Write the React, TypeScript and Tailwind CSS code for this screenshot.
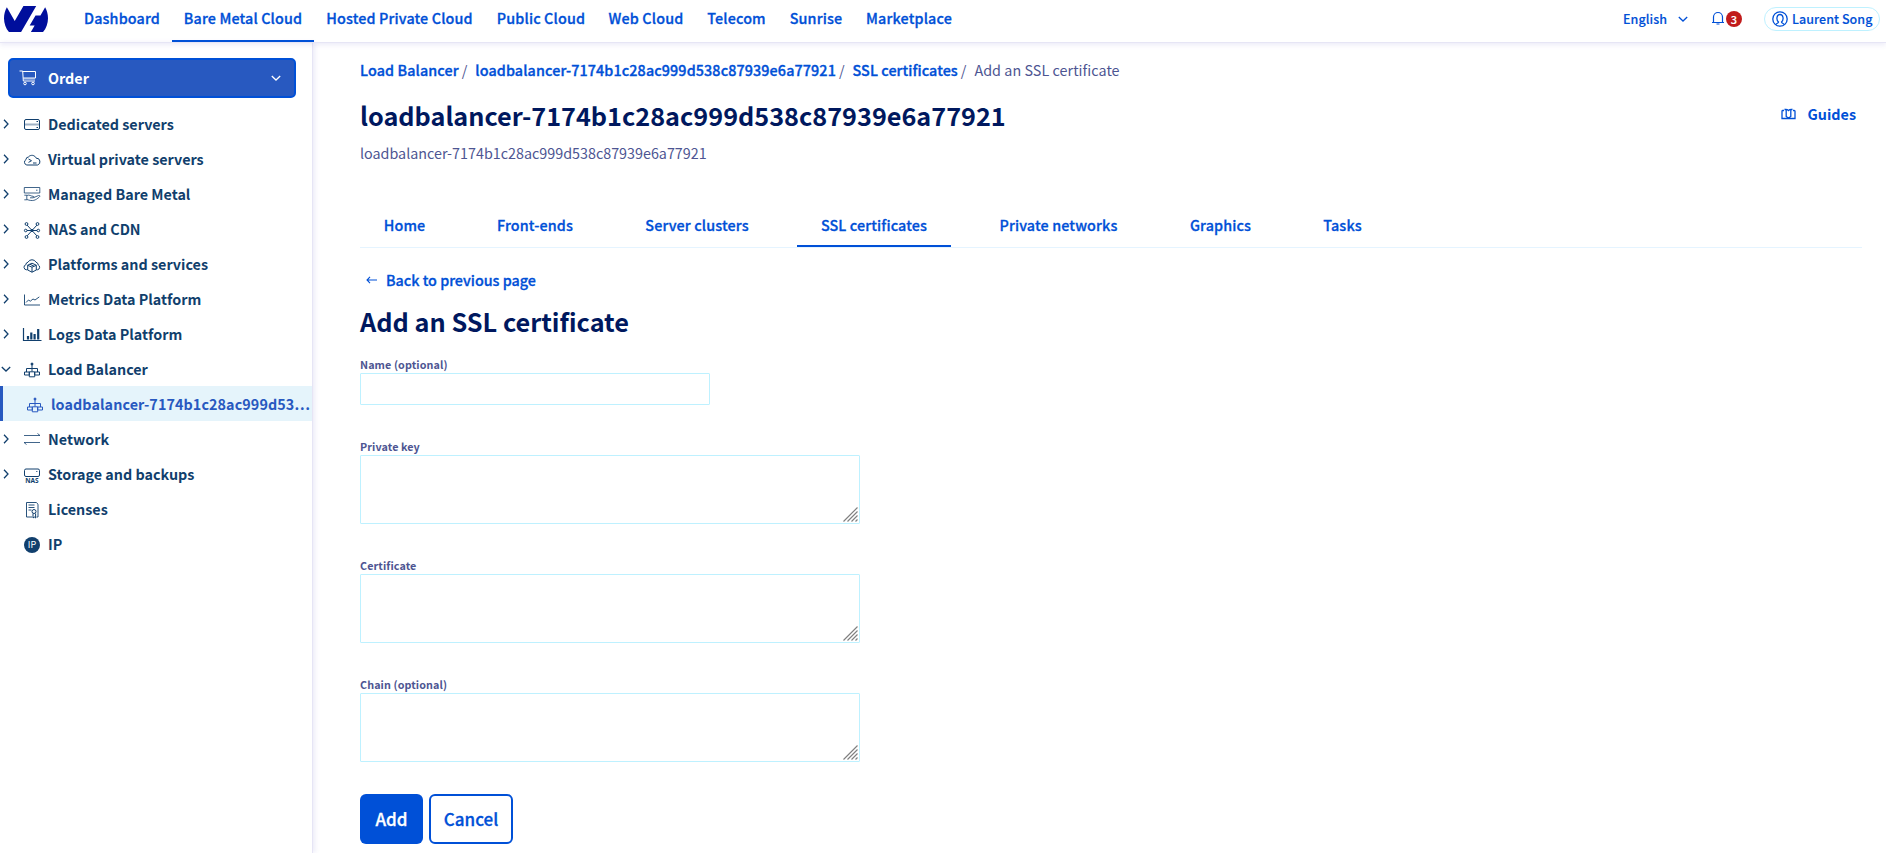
import React from "react";
import { SiOvh } from "react-icons/si";

type IconProps = { className?: string };

const Svg = ({ children }: { children: React.ReactNode }) => (
  <svg width="18" height="18" viewBox="0 0 18 18" fill="none" stroke="currentColor" strokeWidth="1">
    {children}
  </svg>
);

const ServerIcon = () => (
  <Svg>
    <rect x="1.500" y="3.500" width="15" height="10" rx="1.500" />
    <path d="M1.500 8.500h15" strokeWidth="2" strokeOpacity=".4" />
    <path d="M13.500 5.500h1.500M13.500 11.500h1.500" />
  </Svg>
);
const VpsIcon = () => (
  <Svg>
    <path d="M3.800 14A2.900 2.900 0 0 1 3 8.600 2.600 2.600 0 0 1 5.400 6 4.600 4.600 0 0 1 13.200 7.200 3.500 3.500 0 0 1 14.600 14z" />
    <path d="M5.500 8l3 1.700-3 1.700M10 12h3.500" />
  </Svg>
);
const ManagedIcon = () => (
  <Svg>
    <path d="M1.300 1.500h15.500v5.500H1.300zM13 4.200h1.500" strokeWidth=".8" />
    <path d="M1.300 9.200h2.500v4.600H1.300M3.800 9.400c3-1 4.200.9 6.200.9 1.300 0 1.300 1.500 0 1.500H7M10.800 11.500l4.800-2c1.300-.3 1.700.7.7 1.500-4 3.600-6.500 4.500-12.500 2.500" strokeWidth=".8" />
  </Svg>
);
const NasCdnIcon = () => (
  <Svg>
    <path d="M4 4l10 11M14 4L4 15M3.500 9.500h11" />
    <path d="M9 8l1.500 1.500L9 11 7.500 9.500z" fill="currentColor" />
    <g fill="#fff">
      <circle cx="3.500" cy="3" r="1.400" /><circle cx="14.500" cy="3" r="1.400" />
      <circle cx="2.700" cy="9.500" r="1.300" /><circle cx="15.300" cy="9.500" r="1.300" />
      <circle cx="3.500" cy="16" r="1.400" /><circle cx="14.500" cy="16" r="1.400" />
    </g>
  </Svg>
);
const PlatformsIcon = () => (
  <Svg>
    <path d="M4.500 13.800H3.600A2.600 2.600 0 0 1 2.900 8.700 2.500 2.500 0 0 1 5 6.200 4.500 4.500 0 0 1 13 6.200 3 3 0 0 1 15.200 8.900a2.600 2.600 0 0 1-.8 4.900h-1" />
    <path d="M9 7.200l4.300 2v4.800L9 16.200 4.700 14V9.200zM4.700 9.300L9 11.200l4.300-1.900M9 11.200v5M6.800 8.200l4.300 2" />
  </Svg>
);
const MetricsIcon = () => (
  <Svg>
    <path d="M1.500 3.500v10.500h15.500M3 11.500l2.500-2.500 1.800 1.200 2.700-2.200 2 1 4.300-3.100" strokeWidth=".9" />
  </Svg>
);
const LogsIcon = () => (
  <svg width="20" height="18" viewBox="0 0 20 18" fill="none" stroke="currentColor" className="-ml-px">
    <path d="M1.500 2v12.500H19.500" strokeWidth="1.200" />
    <path d="M6 13.500v-3.500M9.300 13.500V6.500M12.600 13.500V8M16.200 13.500V3" strokeWidth="2.200" />
  </svg>
);
const BalancerIcon = () => (
  <Svg>
    <circle cx="9" cy="3" r="1" fill="currentColor" />
    <path d="M9 3v7.500M3.500 11V7.500h11V11M1.500 11h4.800v3H1.500zM11.700 11h4.800v3h-4.800z" />
    <path d="M6.300 10.800h5.400v5H6.300z" />
  </Svg>
);
const NetworkIcon = () => (
  <Svg>
    <path d="M1 4.500h16M14.500 2.500L17 4.500M17 11.500H1M3.500 13.500L1 11.500" strokeWidth=".8" />
  </Svg>
);
const StorageIcon = () => (
  <Svg>
    <rect x="1.500" y="3" width="15" height="7.500" rx="1.500" />
    <path d="M13 5.500h1.500" strokeWidth=".7" />
    <text x="9" y="17.300" textAnchor="middle" fontSize="6.500" fontWeight="700" fontFamily="Noto Sans" fill="currentColor" stroke="none">NAS</text>
  </Svg>
);
const LicenseIcon = () => (
  <Svg>
    <path d="M9 16H3.500V1.500h9.800L15 3.200V16h-1.500M5.500 4h6M5.500 6.500h6M5.500 9h3" strokeWidth=".9" />
    <circle cx="11" cy="10.500" r="2" />
    <path d="M10 12.500V17l1.300-1 1.300 1v-4.500" />
  </Svg>
);
const IpIcon = () => (
  <Svg>
    <circle cx="9" cy="9" r="8" fill="currentColor" stroke="none" />
    <text x="9" y="12.400" textAnchor="middle" fontSize="9" fontWeight="400" fontFamily="Noto Sans CJK SC" fill="#fff" stroke="none">IP</text>
  </Svg>
);
const CartIcon = () => (
  <svg width="18" height="16" viewBox="0 0 18 16" fill="none" stroke="#fff" strokeWidth="1">
    <path d="M.5 1h3.200l.6 10h11.700M3.700 1.500h12.800V8H4.200" />
    <path d="M4.500 9h11.500" strokeWidth=".7" />
    <circle cx="6" cy="13.500" r="1.300" /><circle cx="14" cy="13.500" r="1.300" />
  </svg>
);
const Chevron = ({ className = "" }: IconProps) => (
  <svg width="10" height="10" viewBox="0 0 10 10" fill="none" stroke="currentColor" strokeWidth="1.300" className={className}>
    <path d="M.8 3l4.200 4 4.200-4" />
  </svg>
);

const topNav = [
  { label: "Dashboard", w: "w-[98px]" },
  { label: "Bare Metal Cloud", w: "w-[142px]", active: true },
  { label: "Hosted Private Cloud", w: "w-[171px]" },
  { label: "Public Cloud", w: "w-[112px]" },
  { label: "Web Cloud", w: "w-[98px]" },
  { label: "Telecom", w: "w-[83px]" },
  { label: "Sunrise", w: "w-[76px]" },
  { label: "Marketplace", w: "w-[110px]" },
];

const sideNav = [
  { label: "Dedicated servers", icon: <ServerIcon />, chevron: "right" },
  { label: "Virtual private servers", icon: <VpsIcon />, chevron: "right" },
  { label: "Managed Bare Metal", icon: <ManagedIcon />, chevron: "right" },
  { label: "NAS and CDN", icon: <NasCdnIcon />, chevron: "right" },
  { label: "Platforms and services", icon: <PlatformsIcon />, chevron: "right" },
  { label: "Metrics Data Platform", icon: <MetricsIcon />, chevron: "right" },
  { label: "Logs Data Platform", icon: <LogsIcon />, chevron: "right" },
  { label: "Load Balancer", icon: <BalancerIcon />, chevron: "down" },
  { label: "loadbalancer-7174b1c28ac999d53…", icon: <BalancerIcon />, active: true },
  { label: "Network", icon: <NetworkIcon />, chevron: "right" },
  { label: "Storage and backups", icon: <StorageIcon />, chevron: "right" },
  { label: "Licenses", icon: <LicenseIcon /> },
  { label: "IP", icon: <IpIcon /> },
];

const tabs = [
  { label: "Home", w: "w-[89px]" },
  { label: "Front-ends", w: "w-[124px]" },
  { label: "Server clusters", w: "w-[152px]" },
  { label: "SSL certificates", w: "w-[154px]", active: true },
  { label: "Private networks", w: "w-[167px]" },
  { label: "Graphics", w: "w-[109px]" },
  { label: "Tasks", w: "w-[87px]" },
];

const ResizeHandle = () => (
  <svg width="15" height="15" viewBox="0 0 15 15" stroke="#808080" strokeWidth="1.200" className="absolute right-px bottom-px">
    <path d="M.5 14.500l14-14M4.500 14.500l10-10M8.500 14.500l6-6M12.500 14.500l2-2" />
  </svg>
);

const FieldLabel = ({ children }: { children: React.ReactNode }) => (
  <label className="block h-4 text-[10.750px] leading-4 font-bold tracking-[0.1px] text-[#4d5592]">{children}</label>
);

const Area = ({ label }: { label: string }) => (
  <div className="mb-[34px]">
    <FieldLabel>{label}</FieldLabel>
    <div className="relative h-[69px] w-[500px] rounded-[1px] border border-[#bef1ff]">
      <ResizeHandle />
    </div>
  </div>
);

const Slash = () => <span className="mr-2 ml-[3px] font-normal text-[#4d5592] [-webkit-text-stroke:0px]">/</span>;

export default function App() {
  return (
    <div className="flex h-[853px] w-full flex-col overflow-hidden bg-white font-['Noto_Sans_CJK_SC','Noto_Sans',sans-serif] text-[14.330px] text-[#0050d7]">
      <header className="relative z-10 flex h-[43px] shrink-0 border-b border-[#e6e5f5] shadow-[0_2px_5px_rgba(100,90,200,0.12)]">
        <div className="flex w-[73px] shrink-0 items-center pb-1 pl-1 text-[#000e9c]">
          <SiOvh size={44} />
        </div>
        <nav className="flex">
          {topNav.map((n) => (
            <a key={n.label} className={`${n.w} flex h-[42px] justify-center border-b-2 pt-[7px] font-medium tracking-[0.15px] [-webkit-text-stroke:0.3px] whitespace-nowrap leading-[22px] first:mr-px ${n.active ? "border-[#0050d7]" : "border-transparent"}`}>
              {n.label}
            </a>
          ))}
        </nav>
        <div className="ml-auto flex h-[38px] items-center pr-1.5 text-[12.500px] font-medium [-webkit-text-stroke:0.15px]">
          <span className="tracking-[0.05px]">English</span>
          <Chevron className="ml-[11px]" />
          <svg width="14" height="14" viewBox="0 0 14 14" fill="none" stroke="currentColor" strokeWidth="1.200" className="mr-px mb-0.5 ml-[23px]">
            <path d="M1 11.500h12M2.500 11.500V6a4.500 4.500 0 0 1 9 0v5.500M5.500 13h3" />
          </svg>
          <span className="flex size-4 items-center justify-center rounded-full bg-[#c11b1b] text-[11px] text-white">3</span>
          <div className="ml-[22px] flex h-6 w-[116px] items-center gap-1 rounded-full border border-[#bef1ff] pl-[7px]">
            <svg width="16" height="16" viewBox="0 0 16 16" fill="none" stroke="currentColor" strokeWidth="1.300" className="shrink-0">
              <circle cx="8" cy="8" r="7.200" />
              <path d="M4 13.500c.5-1.500 2.500-1 2.500-2.500C4 9 4.500 3.500 8 3.500S12 9 9.500 11c0 1.500 2 1 2.500 2.500" />
            </svg>
            <span className="tracking-[0.05px] whitespace-nowrap">Laurent Song</span>
          </div>
        </div>
      </header>

      <div className="flex min-h-0 flex-1">
        <aside className="w-[313px] shrink-0 border-r border-[#e6e5f5] text-[#113f6d] shadow-[2px_0_5px_rgba(100,90,200,0.12)]">
          <div className="mt-[15px] ml-2 flex h-10 w-72 items-center rounded-[5px] border-2 border-[#0050d7] bg-[#2859c0] pl-[9px] font-bold text-white">
            <CartIcon />
            <span className="ml-[11px]">Order</span>
            <Chevron className="mr-[13px] ml-auto" />
          </div>
          <ul className="mt-2">
            {sideNav.map((s) => (
              <li key={s.label} className={`flex h-[35px] items-center font-bold whitespace-nowrap ${s.active ? "border-l-3 border-[#2859c0] bg-[#e5f4fb] tracking-[0.09px] text-[#2859c0]" : ""}`}>
                <span className="w-[23px] shrink-0 pt-px pl-px">
                  {s.chevron && <Chevron className={s.chevron === "right" ? "-rotate-90" : ""} />}
                </span>
                <span className="w-[25px] shrink-0 pt-0.5">{s.icon}</span>
                <span>{s.label}</span>
              </li>
            ))}
          </ul>
        </aside>

        <main className="flex-1 pt-4 pr-6 pl-[47px]">
          <div className="flex h-[22px] items-center font-medium whitespace-nowrap [-webkit-text-stroke:0.35px]">
            <span className="tracking-[0.12px]">Load Balancer</span>
            <Slash />
            <span className="tracking-[0.12px]">loadbalancer-7174b1c28ac999d538c87939e6a77921</span>
            <Slash />
            <span className="tracking-[0.08px]">SSL certificates</span>
            <Slash />
            <span className="font-normal tracking-[0.05px] text-[#4d5592] [-webkit-text-stroke:0px]">Add an SSL certificate</span>
          </div>
          <div className="mt-[17px] flex h-9 items-center">
            <h1 className="text-[25.250px] font-bold text-[#00185e]">loadbalancer-7174b1c28ac999d538c87939e6a77921</h1>
            <div className="mr-1.5 mb-1 ml-auto flex items-center gap-3 font-bold">
              <svg width="15" height="12" viewBox="0 0 15 12" fill="none" stroke="currentColor" strokeWidth="1.300">
                <path d="M3 2.500H1.800a.8.8 0 0 0-.8.800v7.200h13V3.300a.8.8 0 0 0-.8-.8H12M3.500 1.500c1.500-.4 3 0 4 1 1-1 2.500-1.400 4-1M5.200 1.500v7l2.300 1.500 2.300-1.500v-7" />
              </svg>
              <span>Guides</span>
            </div>
          </div>
          <p className="mt-2 h-[22px] leading-[22px] text-[#4d5592]">loadbalancer-7174b1c28ac999d538c87939e6a77921</p>

          <nav className="mt-10 flex h-[44px] gap-6 border-b border-[#e5f4ff]">
            {tabs.map((t) => (
              <a key={t.label} className={`${t.w} flex h-[43px] justify-center border-b-2 pt-[10px] leading-[22px] font-medium tracking-[0.14px] whitespace-nowrap [-webkit-text-stroke:0.3px] ${t.active ? "border-[#0050d7]" : "border-transparent"}`}>
                {t.label}
              </a>
            ))}
          </nav>

          <a className="mt-[21px] flex h-[22px] items-center font-medium [-webkit-text-stroke:0.3px]">
            <svg width="12" height="10" viewBox="0 0 12 10" fill="none" stroke="currentColor" strokeWidth="1.100" className="mr-2 ml-1.5">
              <path d="M11 5H1M4 1.800L1 5l3 3.200" />
            </svg>
            Back to previous page
          </a>
          <h2 className="mt-3 h-9 text-[25.300px] leading-9 font-bold text-[#00185e]">Add an SSL certificate</h2>

          <div className="mt-[18px] mb-[34px]">
            <FieldLabel>Name (optional)</FieldLabel>
            <div className="h-8 w-[350px] rounded-[1px] border border-[#bef1ff]" />
          </div>
          <Area label="Private key" />
          <Area label="Certificate" />
          <Area label="Chain (optional)" />
          <div className="-mt-0.5 flex gap-1.5 text-[17px] font-medium [-webkit-text-stroke:0.3px]">
            <button className="h-[50px] w-[63px] rounded-md bg-[#0050d7] text-white">Add</button>
            <button className="h-[50px] w-[84px] rounded-md border-2 border-[#0050d7]">Cancel</button>
          </div>
        </main>
      </div>
    </div>
  );
}
